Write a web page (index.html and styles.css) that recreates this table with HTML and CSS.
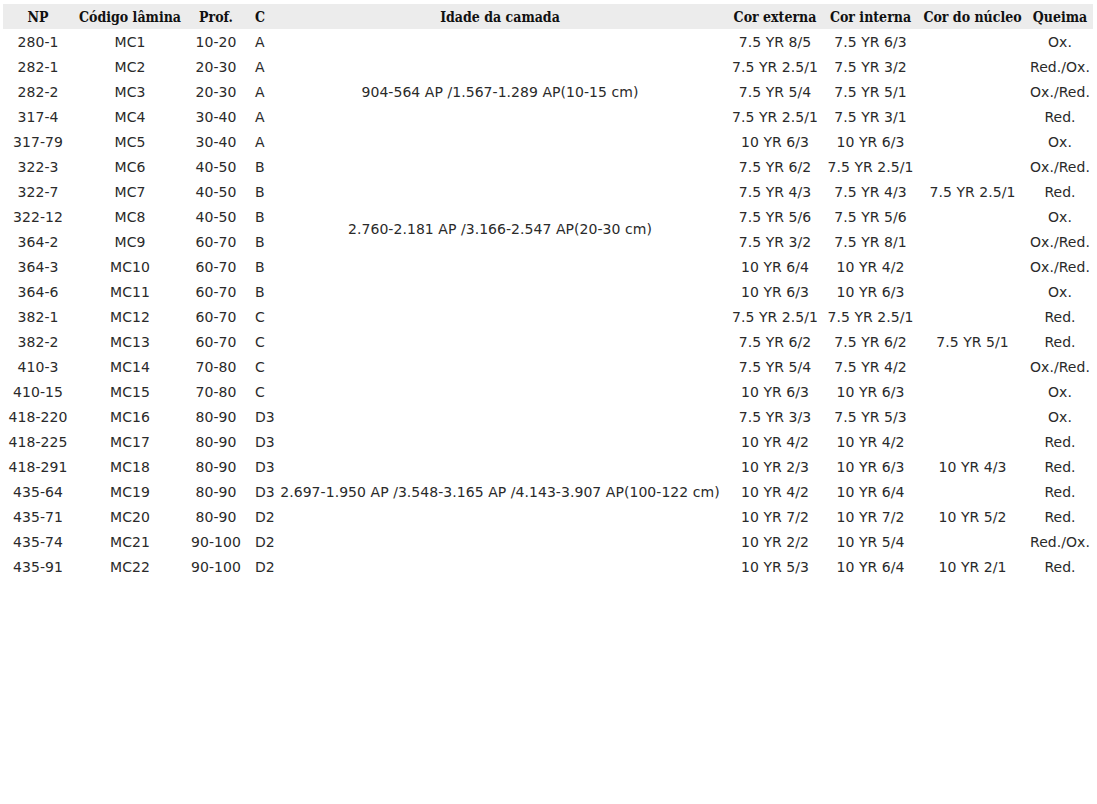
FILE: index.html
```html
<!DOCTYPE html>
<html lang="pt">
<head>
<meta charset="utf-8">
<title>Tabela</title>
<link rel="stylesheet" href="styles.css">
</head>
<body>
<table class="data">
<colgroup>
<col class="c-np"><col class="c-cod"><col class="c-prof"><col class="c-c"><col class="c-idade"><col class="c-ext"><col class="c-int"><col class="c-nuc"><col class="c-q">
</colgroup>
<thead>
<tr><th>NP</th><th>Código lâmina</th><th>Prof.</th><th class="left">C</th><th>Idade da camada</th><th>Cor externa</th><th>Cor interna</th><th>Cor do núcleo</th><th>Queima</th></tr>
</thead>
<tbody>
<tr><td>280-1</td><td>MC1</td><td>10-20</td><td class="left">A</td><td rowspan="5">904-564 AP /1.567-1.289 AP(10-15 cm)</td><td>7.5 YR 8/5</td><td>7.5 YR 6/3</td><td></td><td>Ox.</td></tr>
<tr><td>282-1</td><td>MC2</td><td>20-30</td><td class="left">A</td><td>7.5 YR 2.5/1</td><td>7.5 YR 3/2</td><td></td><td>Red./Ox.</td></tr>
<tr><td>282-2</td><td>MC3</td><td>20-30</td><td class="left">A</td><td>7.5 YR 5/4</td><td>7.5 YR 5/1</td><td></td><td>Ox./Red.</td></tr>
<tr><td>317-4</td><td>MC4</td><td>30-40</td><td class="left">A</td><td>7.5 YR 2.5/1</td><td>7.5 YR 3/1</td><td></td><td>Red.</td></tr>
<tr><td>317-79</td><td>MC5</td><td>30-40</td><td class="left">A</td><td>10 YR 6/3</td><td>10 YR 6/3</td><td></td><td>Ox.</td></tr>
<tr><td>322-3</td><td>MC6</td><td>40-50</td><td class="left">B</td><td rowspan="6">2.760-2.181 AP /3.166-2.547 AP(20-30 cm)</td><td>7.5 YR 6/2</td><td>7.5 YR 2.5/1</td><td></td><td>Ox./Red.</td></tr>
<tr><td>322-7</td><td>MC7</td><td>40-50</td><td class="left">B</td><td>7.5 YR 4/3</td><td>7.5 YR 4/3</td><td>7.5 YR 2.5/1</td><td>Red.</td></tr>
<tr><td>322-12</td><td>MC8</td><td>40-50</td><td class="left">B</td><td>7.5 YR 5/6</td><td>7.5 YR 5/6</td><td></td><td>Ox.</td></tr>
<tr><td>364-2</td><td>MC9</td><td>60-70</td><td class="left">B</td><td>7.5 YR 3/2</td><td>7.5 YR 8/1</td><td></td><td>Ox./Red.</td></tr>
<tr><td>364-3</td><td>MC10</td><td>60-70</td><td class="left">B</td><td>10 YR 6/4</td><td>10 YR 4/2</td><td></td><td>Ox./Red.</td></tr>
<tr><td>364-6</td><td>MC11</td><td>60-70</td><td class="left">B</td><td>10 YR 6/3</td><td>10 YR 6/3</td><td></td><td>Ox.</td></tr>
<tr><td>382-1</td><td>MC12</td><td>60-70</td><td class="left">C</td><td></td><td>7.5 YR 2.5/1</td><td>7.5 YR 2.5/1</td><td></td><td>Red.</td></tr>
<tr><td>382-2</td><td>MC13</td><td>60-70</td><td class="left">C</td><td></td><td>7.5 YR 6/2</td><td>7.5 YR 6/2</td><td>7.5 YR 5/1</td><td>Red.</td></tr>
<tr><td>410-3</td><td>MC14</td><td>70-80</td><td class="left">C</td><td></td><td>7.5 YR 5/4</td><td>7.5 YR 4/2</td><td></td><td>Ox./Red.</td></tr>
<tr><td>410-15</td><td>MC15</td><td>70-80</td><td class="left">C</td><td></td><td>10 YR 6/3</td><td>10 YR 6/3</td><td></td><td>Ox.</td></tr>
<tr><td>418-220</td><td>MC16</td><td>80-90</td><td class="left">D3</td><td></td><td>7.5 YR 3/3</td><td>7.5 YR 5/3</td><td></td><td>Ox.</td></tr>
<tr><td>418-225</td><td>MC17</td><td>80-90</td><td class="left">D3</td><td></td><td>10 YR 4/2</td><td>10 YR 4/2</td><td></td><td>Red.</td></tr>
<tr><td>418-291</td><td>MC18</td><td>80-90</td><td class="left">D3</td><td></td><td>10 YR 2/3</td><td>10 YR 6/3</td><td>10 YR 4/3</td><td>Red.</td></tr>
<tr><td>435-64</td><td>MC19</td><td>80-90</td><td class="left">D3</td><td>2.697-1.950 AP /3.548-3.165 AP /4.143-3.907 AP(100-122 cm)</td><td>10 YR 4/2</td><td>10 YR 6/4</td><td></td><td>Red.</td></tr>
<tr><td>435-71</td><td>MC20</td><td>80-90</td><td class="left">D2</td><td></td><td>10 YR 7/2</td><td>10 YR 7/2</td><td>10 YR 5/2</td><td>Red.</td></tr>
<tr><td>435-74</td><td>MC21</td><td>90-100</td><td class="left">D2</td><td></td><td>10 YR 2/2</td><td>10 YR 5/4</td><td></td><td>Red./Ox.</td></tr>
<tr><td>435-91</td><td>MC22</td><td>90-100</td><td class="left">D2</td><td></td><td>10 YR 5/3</td><td>10 YR 6/4</td><td>10 YR 2/1</td><td>Red.</td></tr>
</tbody>
</table>
</body>
</html>
```
FILE: styles.css
```css
body {
  margin: 0;
  background: #ffffff;
  color: #2a2a2a;
  font-family: "DejaVu Sans", sans-serif;
}
.data {
  margin: 4px 0 0 3px;
  width: 1090px;
  table-layout: fixed;
  border-collapse: collapse;
  font-size: 14px;
  letter-spacing: 0.05px;
}
.c-np { width: 70px; }
.c-cod { width: 114px; }
.c-prof { width: 58px; }
.c-c { width: 28px; }
.c-idade { width: 454px; }
.c-ext { width: 96px; }
.c-int { width: 95px; }
.c-nuc { width: 109px; }
.c-q { width: 66px; }
.data th {
  background: #ececec;
  height: 25px;
  padding: 0;
  font-family: "DejaVu Serif Condensed", "DejaVu Serif", serif;
  font-stretch: condensed;
  font-weight: bold;
  font-size: 14px;
  letter-spacing: 0;
  color: #111111;
  text-align: center;
  white-space: nowrap;
}
.data td {
  height: 25px;
  padding: 0;
  text-align: center;
  white-space: nowrap;
  vertical-align: middle;
}
.data .left {
  text-align: left;
  padding-left: 10px;
}
```
